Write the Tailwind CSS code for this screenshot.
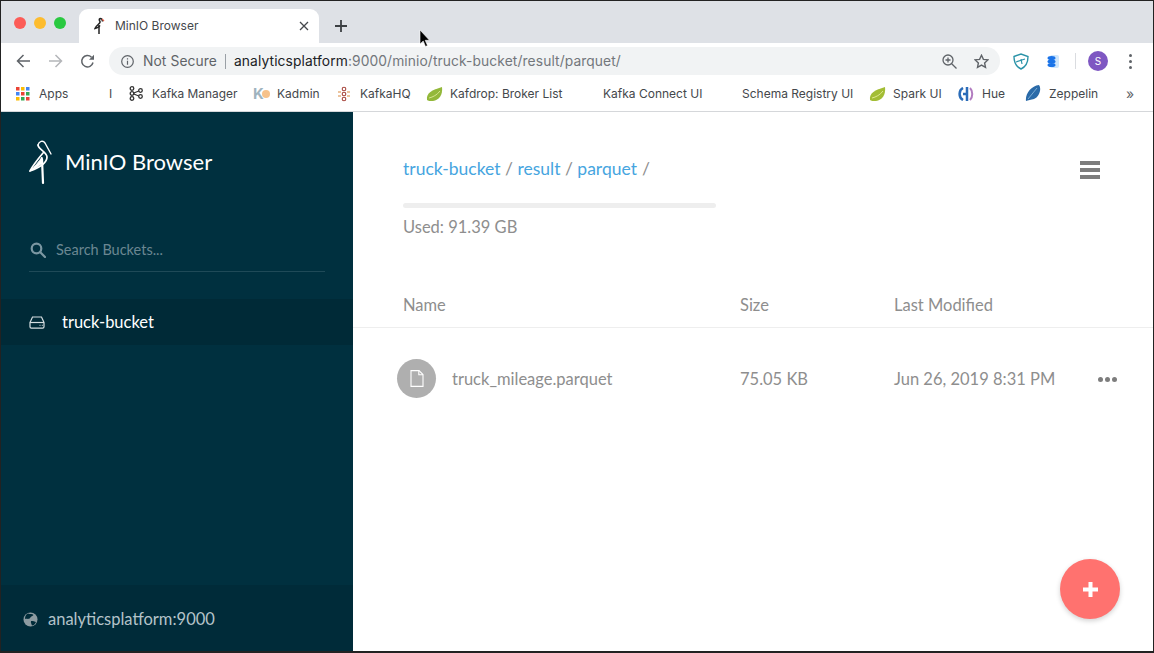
<!DOCTYPE html>
<html lang="en">
<head>
  <meta charset="UTF-8" />
  <meta name="viewport" content="width=device-width, initial-scale=1.0" />
  <title>MinIO Browser</title>
  <script src="https://cdn.jsdelivr.net/npm/@tailwindcss/browser@4"></script>
</head>
<body class="w-[1154px] h-[653px] overflow-hidden bg-white font-['Lato',sans-serif]">
<div class="relative w-[1154px] h-[653px] flex flex-col border border-[#222] border-b-[2px] overflow-hidden">

  <!-- Tab strip -->
  <div class="h-[42px] shrink-0 bg-[#dee1e6] flex items-end font-['Inter',sans-serif] text-[#45484c]">
    <div class="flex items-center gap-2 self-start mt-[16px] ml-[13px]">
      <span class="w-3 h-3 rounded-full bg-[#fc5c57]"></span>
      <span class="w-3 h-3 rounded-full bg-[#fdbc2e]"></span>
      <span class="w-3 h-3 rounded-full bg-[#29c940]"></span>
    </div>
    <div class="relative ml-[13px] w-[240px] h-[34px] bg-white rounded-t-[9px] flex items-center pl-[14px] pr-[10px]">
      <svg class="w-[12px] h-[18px]" viewBox="0 0 12 18" fill="none"><path d="M7 1.500c2 0 2.500 1.500 2.500 3M7 1.500C6 2 6 3 7 4.500c1 2-4 3.500-5 7 2-.5 4-1 5-3" stroke="#222" stroke-width="1.500"/><path d="M6 8v9" stroke="#222" stroke-width="1.500"/><path d="M9 2l2 2" stroke="#e0624d" stroke-width="1.200"/></svg>
      <span class="ml-[10px] text-[12px] leading-none">MinIO Browser</span>
      <svg class="ml-auto w-[10px] h-[10px]" viewBox="0 0 10 10" stroke="#45484c" stroke-width="1.300"><path d="M1 1l8 8M9 1l-8 8"/></svg>
    </div>
    <svg class="ml-[16px] mb-[11px] w-[12px] h-[12px]" viewBox="0 0 12 12" stroke="#3c4043" stroke-width="1.800"><path d="M6 0v12M0 6h12"/></svg>
  </div>

  <!-- Toolbar -->
  <div class="h-[38px] shrink-0 bg-white flex items-center pb-[2px] font-['Inter',sans-serif]">
    <svg class="ml-[15px] w-[14px] h-[14px]" viewBox="0 0 14 14" fill="none" stroke="#5f6368" stroke-width="1.500"><path d="M14 7H1.500M7.500 1l-6 6 6 6"/></svg>
    <svg class="ml-[19px] w-[14px] h-[14px]" viewBox="0 0 14 14" fill="none" stroke="#b4b6b9" stroke-width="1.500"><path d="M0 7h12.500M6.500 1l6 6-6 6"/></svg>
    <svg class="ml-[17px] w-[15px] h-[15px]" viewBox="0 0 15 15" fill="none" stroke="#5f6368" stroke-width="1.500"><path d="M13 8.500A5.700 5.700 0 1 1 11.500 3.200"/><path d="M14 .8v5H9z" fill="#5f6368" stroke="none"/></svg>
    <div class="ml-[14px] w-[891px] h-[28px] rounded-full bg-[#f1f3f4] flex items-center">
      <svg class="ml-[12px] w-[13px] h-[13px]" viewBox="0 0 13 13" fill="none" stroke="#5f6368" stroke-width="1.200"><circle cx="6.500" cy="6.500" r="5.800"/><path d="M6.500 5.700v4M6.500 3.200v1.200"/></svg>
      <span class="ml-[9px] text-[13.8px] text-[#5f6368] tracking-[.1px]">Not Secure</span>
      <span class="ml-[8px] w-px h-[15px] bg-[#9aa0a6]"></span>
      <span class="ml-[8px] text-[13.8px] text-[#73777c] tracking-[.1px]"><span class="text-[#202124]">analyticsplatform</span>:9000/minio/truck-bucket/result/parquet/</span>
      <svg class="ml-auto w-[15px] h-[15px]" viewBox="0 0 15 15" fill="none" stroke="#5f6368" stroke-width="1.300"><circle cx="6" cy="6" r="5"/><path d="M9.700 9.700L14.500 14.500M3.500 6h5M6 3.500v5"/></svg>
      <svg class="ml-[17px] mr-[11px] w-[15px] h-[15px]" viewBox="0 0 15 15" fill="none" stroke="#5f6368" stroke-width="1.400"><path d="M7.500 1.300l1.900 4.100 4.500.5-3.300 3 .9 4.400-4-2.200-4 2.200.9-4.400-3.300-3 4.500-.5z"/></svg>
    </div>
    <svg class="ml-[13px] w-[16px] h-[17px]" viewBox="0 0 16 17" fill="none" stroke="#2a93a8" stroke-width="1.400"><path d="M1 3.500L8 1l7 2.500c0 6-1.500 10-7 12.500C2.500 13.500 1 9.500 1 3.500z"/><path d="M3 9l9-3M8 6l1 5" stroke-width="1.200"/></svg>
    <svg class="ml-[18px] w-[12px] h-[13px]" viewBox="0 0 12 13"><rect x="3" y="0" width="9" height="13" rx="2" fill="#cfe6fb"/><ellipse cx="4.500" cy="3" rx="4" ry="2" fill="#1a73e8"/><ellipse cx="4.500" cy="6.500" rx="4" ry="2" fill="#1a73e8"/><ellipse cx="4.500" cy="10" rx="4" ry="2" fill="#1a73e8"/></svg>
    <span class="ml-[16px] w-px h-[16px] bg-[#dadce0]"></span>
    <span class="ml-[12px] w-[20px] h-[20px] rounded-full bg-[#7e57c2] text-white text-[10px] flex items-center justify-center">S</span>
    <span class="ml-[21px] flex flex-col gap-[3px]">
      <span class="w-[3px] h-[3px] rounded-full bg-[#5f6368]"></span>
      <span class="w-[3px] h-[3px] rounded-full bg-[#5f6368]"></span>
      <span class="w-[3px] h-[3px] rounded-full bg-[#5f6368]"></span>
    </span>
  </div>

  <!-- Bookmarks bar -->
  <div class="h-[31px] shrink-0 bg-white border-b border-[#d5d7da] flex items-center pb-[5px] text-[12px] text-[#44474b] font-['Inter',sans-serif] whitespace-nowrap">
    <svg class="ml-[15px] w-[14px] h-[14px]" viewBox="0 0 14 14">
      <rect x="0" y="0" width="3.500" height="3.500" fill="#ea4335"/><rect x="5" y="0" width="3.500" height="3.500" fill="#fbbc04"/><rect x="10" y="0" width="3.500" height="3.500" fill="#4285f4"/>
      <rect x="0" y="5" width="3.500" height="3.500" fill="#4285f4"/><rect x="5" y="5" width="3.500" height="3.500" fill="#ea4335"/><rect x="10" y="5" width="3.500" height="3.500" fill="#34a853"/>
      <rect x="0" y="10" width="3.500" height="3.500" fill="#fbbc04"/><rect x="5" y="10" width="3.500" height="3.500" fill="#34a853"/><rect x="10" y="10" width="3.500" height="3.500" fill="#ea4335"/>
    </svg>
    <span class="ml-[9px] w-[70px]">Apps</span>
    <span class="w-[20px]">I</span>
    <svg class="w-[15px] h-[15px]" viewBox="0 0 15 15" fill="none" stroke="#333" stroke-width="1.300"><circle cx="3" cy="2.500" r="1.800"/><circle cx="3" cy="7.500" r="1.800"/><circle cx="3" cy="12.500" r="1.800"/><circle cx="11.500" cy="4.500" r="1.800"/><circle cx="11.500" cy="10.500" r="1.800"/><path d="M4.800 7l5-2M4.800 8l5 2"/></svg>
    <span class="ml-[8px] w-[101px] text-[11.9px]">Kafka Manager</span>
    <span class="relative w-[16px] h-[14px] font-bold text-[#9fb4bf] text-[15px] leading-[14px]">K<span class="absolute left-[9px] top-[3px] w-[8px] h-[8px] rounded-full bg-[#f6c28b]"></span></span>
    <span class="ml-[8px] w-[60px]">Kadmin</span>
    <svg class="w-[14px] h-[16px]" viewBox="0 0 14 16" fill="none" stroke="#a8483f" stroke-width="1.100"><circle cx="7" cy="3" r="1.800"/><circle cx="7" cy="8" r="1.800"/><circle cx="7" cy="13" r="1.800"/><path d="M1 6h3M10 6h3M1 10h3M10 10h3" stroke="#d98a3f"/></svg>
    <span class="ml-[9px] w-[66px]">KafkaHQ</span>
    <svg class="w-[17px] h-[14px]" viewBox="0 0 17 14"><path d="M1 13C0 6 6 3 16 0c1 8-3 13-9 14-3 0-5 0-6-1z" fill="#93b83a"/><path d="M3 11c4-1 8-3 11-7" stroke="#d7e58f" fill="none"/></svg>
    <span class="ml-[7px] w-[153px]">Kafdrop: Broker List</span>
    <span class="w-[139px]">Kafka Connect UI</span>
    <span class="w-[127px]">Schema Registry UI</span>
    <svg class="w-[17px] h-[14px]" viewBox="0 0 17 14"><path d="M1 13C0 6 6 3 16 0c1 8-3 13-9 14-3 0-5 0-6-1z" fill="#a3bd35"/><path d="M3 11c4-1 8-3 11-7" stroke="#dfe98f" fill="none"/></svg>
    <span class="ml-[7px] w-[65px]">Spark UI</span>
    <svg class="w-[16px] h-[14px]" viewBox="0 0 16 14" fill="none"><path d="M5 1C1 3 0 10 5 13" stroke="#2b6cb8" stroke-width="2.500"/><path d="M9 0v14M5 7h4" stroke="#2b6cb8" stroke-width="2.500"/><path d="M12 1c3 3 3 9 0 12" stroke="#b27cc0" stroke-width="2"/></svg>
    <span class="ml-[8px] w-[43px]">Hue</span>
    <svg class="w-[16px] h-[17px]" viewBox="0 0 16 17"><path d="M1 16C0 9 6 1 14 0c3 4 0 12-5 14-3 1-6 1-8 2z" fill="#2a6aa8"/><path d="M3 14L12 3" stroke="#8fbce0" stroke-width=".8"/></svg>
    <span class="ml-[8px] w-[77px]">Zeppelin</span>
    <span class="text-[14px] leading-none text-[#5f6368]">»</span>
  </div>

  <!-- Page -->
  <div class="flex flex-1 min-h-0">

    <!-- Sidebar -->
    <aside class="w-[352px] shrink-0 bg-[#00303f] flex flex-col text-white">
      <div class="flex items-center h-[76px] mt-[12px] pl-[27px]">
        <svg class="w-[24px] h-[46px]" viewBox="0 0 24 46" fill="none" stroke="#fff" stroke-linecap="round" stroke-linejoin="round">
          <path d="M10 6C11 2 15 1 17 4L23 15" stroke-width="1.400"/>
          <path d="M10 6C10 10 19 13 19 18C19 24 13 28 2 32C5 26 10 20 15 14" stroke-width="1.700"/>
          <path d="M2 32C7 27 11 23 14 18L14 24C11 27 7 30 2 32Z" fill="#fff" stroke-width="1"/>
          <path d="M14 20L15 44" stroke-width="2.200"/>
        </svg>
        <span class="ml-[13px] text-[22px] leading-none">MinIO Browser</span>
      </div>
      <div class="mx-[28px] mt-[31px] h-[41px] flex items-center border-b border-[#1f4a58]">
        <svg class="w-[16px] h-[16px] ml-[1px] mb-[3px]" viewBox="0 0 16 16" fill="none" stroke="#7b97a2" stroke-width="2.200"><circle cx="6.500" cy="6.500" r="4.800"/><path d="M10.300 10.300L15 15" stroke-linecap="round"/></svg>
        <span class="ml-[10px] mb-[3px] text-[14.5px] text-[#6b8792]">Search Buckets...</span>
      </div>
      <div class="mt-[27px] h-[46px] bg-[#002a37] flex items-center pl-[28px]">
        <svg class="w-[16px] h-[13px]" viewBox="0 0 16 13" fill="none" stroke="#d5dee1" stroke-width="1.200"><path d="M1 6.500L3.500 1h9L15 6.500v4.300a1.300 1.300 0 0 1-1.300 1.300H2.300A1.300 1.300 0 0 1 1 10.800z"/><path d="M1 6.500h14"/><path d="M10.500 9.300h1M12.800 9.300h1" stroke-width="1"/></svg>
        <span class="ml-[17px] text-[16.5px] leading-none">truck-bucket</span>
      </div>
      <div class="mt-auto h-[66px] pt-[2px] bg-[#002b39] flex items-center pl-[22px] text-[#b4c3c9]">
        <svg class="w-[15px] h-[15px]" viewBox="0 0 15 15"><circle cx="7.500" cy="7.500" r="7" fill="#8d9ba1"/><path d="M5 1.500c2 1 4.500 0 5.500 1.500-1 1.500-2.500 1-3.500 3-1 1.500-3 .5-5 1 0-3 1-4.500 3-5.500zM8 9c2 0 4 .5 5 1-1 2.500-2.500 3.500-4 3.500-.5-1.500-1.500-3-1-4.500z" fill="#002b39"/></svg>
        <span class="ml-[10px] text-[16.5px] leading-none">analyticsplatform:9000</span>
      </div>
    </aside>

    <!-- Main -->
    <main class="relative flex-1 flex flex-col text-[#8e8e8e]">
      <div class="flex items-start pl-[50px] pr-[53px] pt-[46px]">
        <div class="w-[313px]">
          <div class="text-[17.5px] leading-[22px] whitespace-nowrap">
            <span class="text-[#46a5e0]">truck-bucket</span><span class="mx-[4.5px]">/</span><span class="text-[#46a5e0]">result</span><span class="mx-[4.5px]">/</span><span class="text-[#46a5e0]">parquet</span><span class="ml-[5px]">/</span>
          </div>
          <div class="mt-[23px] h-[5px] w-full rounded-full bg-[#eeeeee]"></div>
          <div class="mt-[9px] text-[16.5px] leading-5">Used: 91.39 GB</div>
        </div>
        <div class="ml-auto mt-[3px] flex flex-col gap-[3px]">
          <span class="block w-[20px] h-[4px] bg-[#7d7d7d]"></span>
          <span class="block w-[20px] h-[4px] bg-[#7d7d7d]"></span>
          <span class="block w-[20px] h-[4px] bg-[#7d7d7d]"></span>
        </div>
      </div>

      <div class="mt-[47px] h-[44px] pb-[1px] border-b border-[#eeeeee] flex items-center pl-[50px] text-[16.5px]">
        <span class="w-[337px]">Name</span>
        <span class="w-[154px]">Size</span>
        <span>Last Modified</span>
      </div>

      <div class="h-[102px] flex items-center pl-[44px] text-[16.5px]">
        <span class="w-[39px] h-[39px] -mt-[2px] rounded-full bg-[#afafaf] flex items-center justify-center shrink-0">
          <svg class="w-[14px] h-[17px]" viewBox="0 0 14 17" fill="none" stroke="#fff" stroke-width="1.100"><path d="M1 .6h8l4 4v11.800H1z"/><path d="M8.800.6v4.200H13"/></svg>
        </span>
        <span class="ml-[16px] w-[288px]">truck_mileage.parquet</span>
        <span class="w-[154px]">75.05 KB</span>
        <span class="w-[204px] whitespace-nowrap">Jun 26, 2019 8:31 PM</span>
        <span class="flex gap-[2px]">
          <span class="w-[5px] h-[5px] rounded-full bg-[#7d7d7d]"></span>
          <span class="w-[5px] h-[5px] rounded-full bg-[#7d7d7d]"></span>
          <span class="w-[5px] h-[5px] rounded-full bg-[#7d7d7d]"></span>
        </span>
      </div>

      <!-- Floating add button -->
      <button class="absolute right-[33px] bottom-[32px] w-[60px] h-[60px] rounded-full bg-[#ff726f] shadow-[0_2px_5px_rgba(0,0,0,0.18)] flex items-center justify-center">
        <svg class="w-[15px] h-[15px]" viewBox="0 0 15 15" stroke="#fff" stroke-width="4"><path d="M7.500 0v15M0 7.500h15"/></svg>
      </button>
    </main>
  </div>

  <!-- Mouse cursor -->
  <svg class="absolute left-[418px] top-[29px] w-[11px] h-[17px]" viewBox="0 0 11 17"><path d="M1 0v14l3.200-3 2.300 5.500 2-1-2.300-5.200H10.500z" fill="#000" stroke="#fff" stroke-width=".6"/></svg>
</div>
</body>
</html>
